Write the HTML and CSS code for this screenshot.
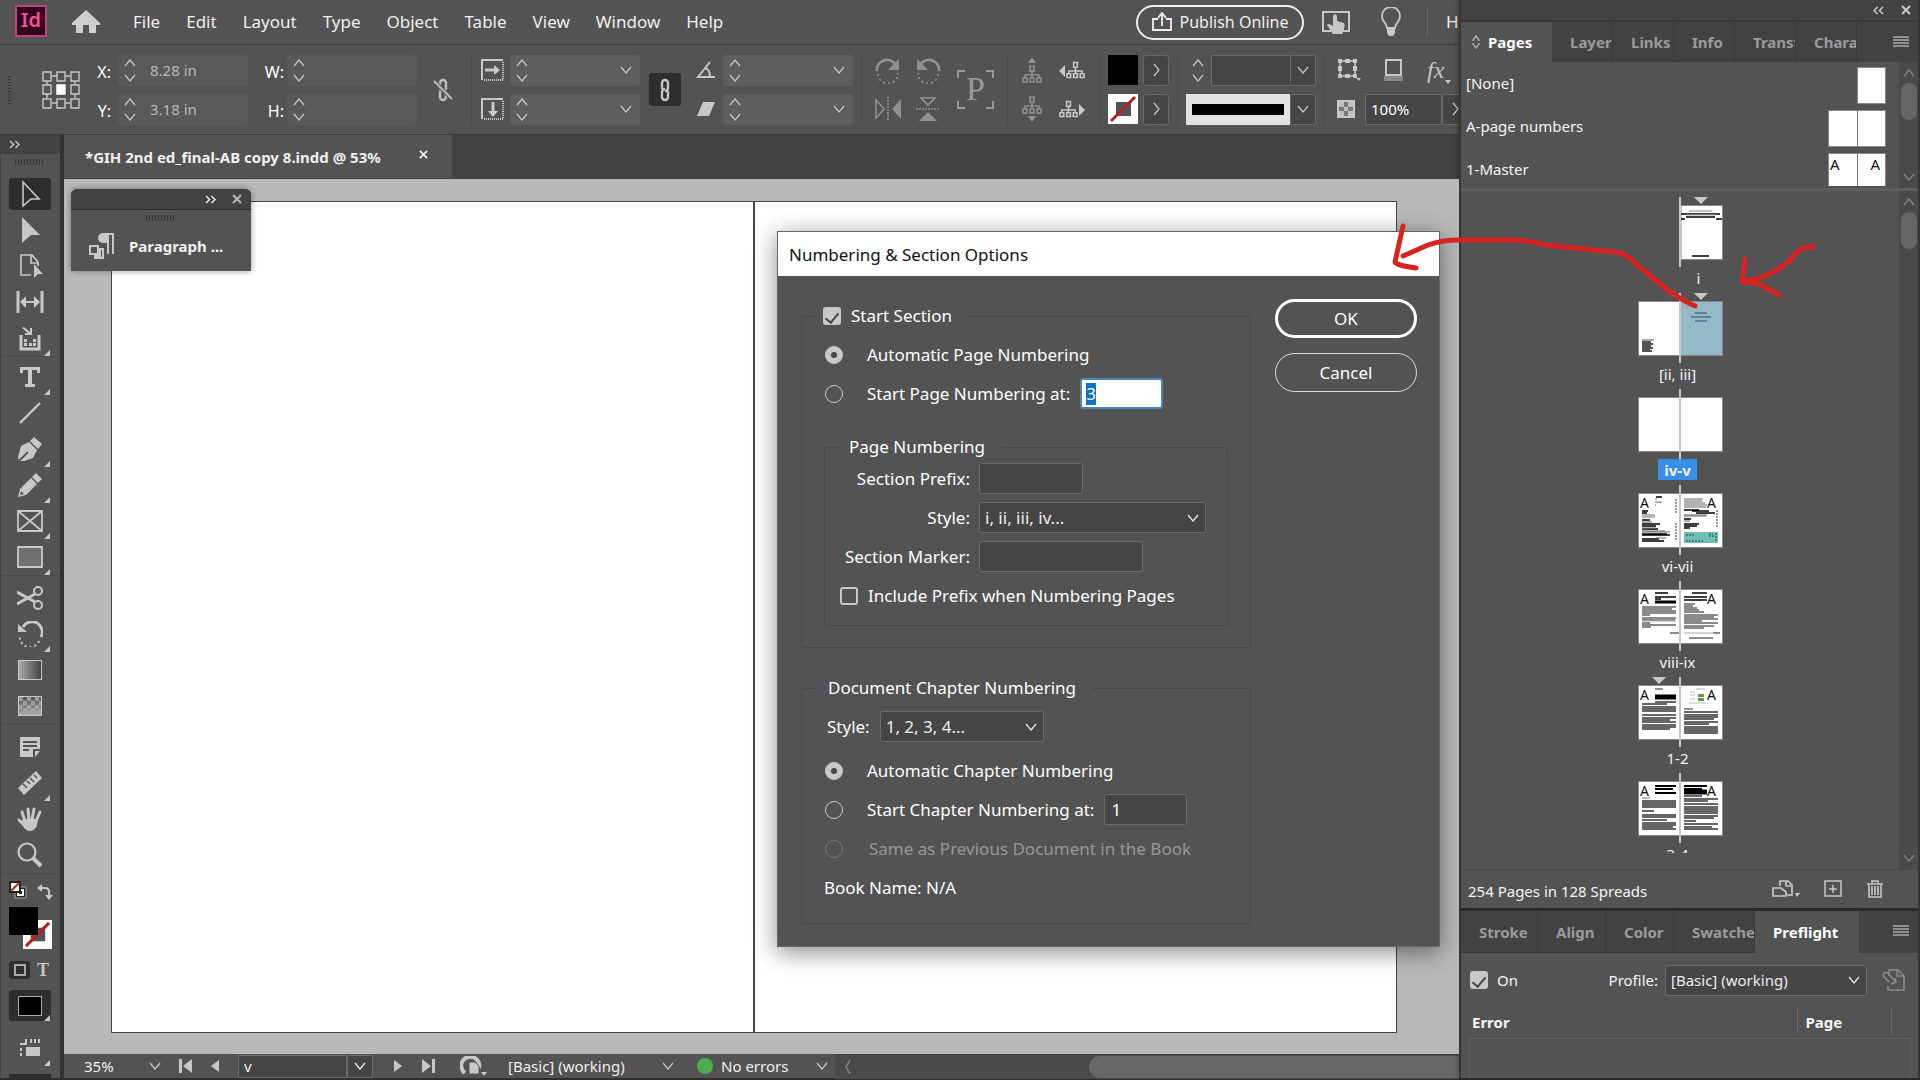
FILE: index.html
```html
<!DOCTYPE html>
<html lang="en">
<head>
<meta charset="utf-8">
<title>InDesign - Numbering &amp; Section Options</title>
<link rel="stylesheet" href="styles.css">
</head>
<body>
<svg class="defs" aria-hidden="true">
  <symbol id="down" viewBox="0 0 14 14"><path d="M2 4l5 6 5-6" fill="none" stroke="currentColor" stroke-width="1.2"/></symbol>
  <symbol id="up" viewBox="0 0 14 14"><path d="M2 10l5-6 5 6" fill="none" stroke="currentColor" stroke-width="1.2"/></symbol>
  <symbol id="right" viewBox="0 0 14 14"><path d="M5 1l5 6-5 6" fill="none" stroke="currentColor" stroke-width="1.2"/></symbol>
  <symbol id="expand" viewBox="0 0 12 10"><path d="M1 1l4 4-4 4M7 1l4 4-4 4" fill="none" stroke="currentColor" stroke-width="1.6"/></symbol>
  <symbol id="collapse" viewBox="0 0 12 10"><path d="M5 1L1 5l4 4M11 1L7 5l4 4" fill="none" stroke="currentColor" stroke-width="1.6"/></symbol>
  <symbol id="close" viewBox="0 0 10 10"><path d="M1 1l8 8M9 1L1 9" fill="none" stroke="currentColor" stroke-width="2"/></symbol>
  <symbol id="menu" viewBox="0 0 16 12"><path d="M0 1h16M0 4h16M0 7h16M0 10h16" stroke="currentColor" stroke-width="1.6"/></symbol>
  <symbol id="stepper" viewBox="0 0 14 30"><path d="M2 11l5-6 5 6M2 20l5 6 5-6" fill="none" stroke="currentColor" stroke-width="1.2"/></symbol>
  <symbol id="chain" viewBox="0 0 14 24"><path d="M4 11V5a3 3 0 0 1 6 0v5a3 3 0 0 1-3 3M10 13v6a3 3 0 0 1-6 0v-5a3 3 0 0 1 3-3" fill="none" stroke="currentColor" stroke-width="2.4"/></symbol>
  <symbol id="tree" viewBox="0 0 20 18"><path d="M8 1h4v5H8zM10 6v4M3 13v-3h14v3M10 10v3M1 13h4v4H1zM8 13h4v4H8zM15 13h4v4h-4z" fill="none" stroke="currentColor" stroke-width="1.6"/></symbol>
  <symbol id="none" viewBox="0 0 30 30"><path d="M0 0h30v30H0z" fill="#fff"/><path d="M8 8h15v14H8z" fill="#535353"/><path d="M3 27L27 3" stroke="#b8201f" stroke-width="3"/></symbol>
  <symbol id="corner" viewBox="0 0 6 6"><path d="M6 0v6H0z" fill="currentColor"/></symbol>
</svg>

<div class="app">
  <div class="workspace">
    <header class="menubar">
      <span class="logo">Id</span>
      <button class="icon-btn home" aria-label="Home"><svg width="28" height="24" viewBox="0 0 28 24"><path d="M14 0L0 13v2h4v8h7v-8h6v8h7v-8h4v-2z" fill="#cfcfcf"/></svg></button>
      <nav class="menus">
        <a href="#">File</a><a href="#">Edit</a><a href="#">Layout</a><a href="#">Type</a><a href="#">Object</a><a href="#">Table</a><a href="#">View</a><a href="#">Window</a><a href="#">Help</a>
      </nav>
      <button class="publish"><svg width="20" height="20" viewBox="0 0 20 20"><path d="M6 7H1v11h18V7h-5M10 14V3M6 6l4-5 4 5" fill="none" stroke="currentColor" stroke-width="1.8"/></svg>Publish Online</button>
      <button class="icon-btn touch" aria-label="Touch workspace"><svg width="28" height="24" viewBox="0 0 28 24"><path d="M9 21H1V2h26v19h-7" fill="none" stroke="#c8c8c8" stroke-width="2"/><path d="M11 6c0-2 4-2 4 0v5l7 2c1 1 1 6-2 11h-9l-6-9c1-2 3-1 6 1z" fill="#c8c8c8"/></svg></button>
      <button class="icon-btn bulb" aria-label="Learn"><svg width="22" height="30" viewBox="0 0 22 30"><path d="M7 21c0-5-5-6-5-12a9 9 0 0 1 18 0c0 6-5 7-5 12z" fill="none" stroke="#c8c8c8" stroke-width="1.8"/><path d="M7 22h8v4l-2 3H9l-2-3z" fill="#c8c8c8"/></svg></button>
      <i class="vline tall"></i>
      <span class="home-label">H</span>
    </header>

    <section class="control" aria-label="Control">
      <i class="grip-v"></i>
      <svg class="refgrid" width="38" height="38" viewBox="0 0 38 38" fill="none" stroke="#c8c8c8" stroke-width="1.4"><path d="M10 5h5M23 5h5M10 32h5M23 32h5M5 10v4M5 23v4M33 10v4M33 23v4M1 1h8v9H1zM15 1h8v9h-8zM29 1h8v9h-8zM1 14h8v9H1zM29 14h8v9h-8zM1 28h8v9H1zM15 28h8v9h-8zM29 28h8v9h-8z"/><path d="M15 14h8v9h-8z" fill="#fff" stroke="#fff"/></svg>
      <div class="pair labels xy"><label for="x">X:</label><label for="y">Y:</label></div>
      <div class="pair">
        <span class="field off"><svg width="14" height="30"><use href="#stepper"/></svg><input id="x" value="8.28 in"></span>
        <span class="field off"><svg width="14" height="30"><use href="#stepper"/></svg><input id="y" value="3.18 in"></span>
      </div>
      <div class="pair labels wh"><label for="w">W:</label><label for="h">H:</label></div>
      <div class="pair">
        <span class="field off"><svg width="14" height="30"><use href="#stepper"/></svg><input id="w"></span>
        <span class="field off"><svg width="14" height="30"><use href="#stepper"/></svg><input id="h"></span>
      </div>
      <svg class="unlink" width="20" height="24" viewBox="0 0 20 24" color="#bdbdbd"><use href="#chain" x="3" width="14" height="24"/><path d="M1 3l18 18" stroke="#535353" stroke-width="4"/><path d="M1 3l18 18" stroke="#bdbdbd" stroke-width="2"/></svg>
      <i class="vline"></i>
      <div class="pair icons scale">
        <svg width="24" height="22" viewBox="0 0 24 22"><path d="M1 21V1h21" fill="none" stroke="currentColor" stroke-width="2"/><path d="M22 3v18H2" fill="none" stroke="currentColor" stroke-width="2" stroke-dasharray="1 1"/><path d="M4 11h10" stroke="currentColor" stroke-width="3"/><path d="M13 6l6 5-6 5z" fill="currentColor"/></svg>
        <svg width="24" height="22" viewBox="0 0 24 22"><path d="M1 21V1h21" fill="none" stroke="currentColor" stroke-width="2"/><path d="M22 3v18H2" fill="none" stroke="currentColor" stroke-width="2" stroke-dasharray="1 1"/><path d="M12 4v10" stroke="currentColor" stroke-width="3"/><path d="M7 13h10l-5 6z" fill="currentColor"/></svg>
      </div>
      <div class="pair">
        <span class="field off light"><svg width="14" height="30"><use href="#stepper"/></svg><input aria-label="Scale X"><svg width="14" height="14"><use href="#down"/></svg></span>
        <span class="field off light"><svg width="14" height="30"><use href="#stepper"/></svg><input aria-label="Scale Y"><svg width="14" height="14"><use href="#down"/></svg></span>
      </div>
      <button class="linked" aria-label="Constrain proportions"><svg width="14" height="24"><use href="#chain"/></svg></button>
      <div class="pair icons angle">
        <svg width="20" height="18" viewBox="0 0 20 18"><path d="M14 1L2 16h17M9 7c4 1 5 5 5 9" fill="none" stroke="currentColor" stroke-width="2"/></svg>
        <svg width="20" height="18" viewBox="0 0 20 18"><path d="M7 2h12l-6 14H1z" fill="currentColor"/></svg>
      </div>
      <div class="pair">
        <span class="field off light"><svg width="14" height="30"><use href="#stepper"/></svg><input aria-label="Rotation"><svg width="14" height="14"><use href="#down"/></svg></span>
        <span class="field off light"><svg width="14" height="30"><use href="#stepper"/></svg><input aria-label="Shear"><svg width="14" height="14"><use href="#down"/></svg></span>
      </div>
      <i class="vline"></i>
      <div class="quad dim">
        <svg width="26" height="26" viewBox="0 0 26 26"><path d="M2 13A10 10 0 0 1 20 6" fill="none" stroke="currentColor" stroke-width="3"/><path d="M24 1v11H13z" fill="currentColor"/><path d="M3 16a10 10 0 0 0 20-1" fill="none" stroke="currentColor" stroke-width="2" stroke-dasharray="2 3"/></svg>
        <svg width="26" height="26" viewBox="0 0 26 26"><path d="M24 13A10 10 0 0 0 6 6" fill="none" stroke="currentColor" stroke-width="3"/><path d="M2 1v11h11z" fill="currentColor"/><path d="M23 16a10 10 0 0 1-20-1" fill="none" stroke="currentColor" stroke-width="2" stroke-dasharray="2 3"/></svg>
        <svg width="26" height="24" viewBox="0 0 26 24"><path d="M1 3v18l8-9z" fill="none" stroke="currentColor" stroke-width="1.6"/><path d="M13 0v24" stroke="currentColor" stroke-width="1.6" stroke-dasharray="2 1"/><path d="M26 2v20l-9-10z" fill="currentColor"/></svg>
        <svg width="26" height="24" viewBox="0 0 26 24"><path d="M6 1h14l-7 7z" fill="none" stroke="currentColor" stroke-width="1.6"/><path d="M1 12h24" stroke="currentColor" stroke-width="1.6" stroke-dasharray="2 1"/><path d="M4 24h18l-9-9z" fill="currentColor"/></svg>
      </div>
      <div class="bigp">P</div>
      <i class="vline"></i>
      <div class="quad trees">
        <svg class="dim" width="26" height="26" viewBox="0 0 26 26"><path d="M9 6l4-6 4 6z" fill="currentColor"/><use href="#tree" x="3" y="8" width="20" height="18"/></svg>
        <svg width="26" height="26" viewBox="0 0 26 26"><path d="M6 8v12l-6-6z" fill="currentColor"/><use href="#tree" x="7" y="4" width="19" height="18"/></svg>
        <svg class="dim" width="26" height="26" viewBox="0 0 26 26"><path d="M9 20l4 6 4-6z" fill="currentColor"/><use href="#tree" x="3" y="0" width="20" height="18"/></svg>
        <svg width="26" height="26" viewBox="0 0 26 26"><path d="M20 8v12l6-6z" fill="currentColor"/><use href="#tree" x="0" y="4" width="19" height="18"/></svg>
      </div>
      <i class="vline"></i>
      <div class="pair swatches">
        <span><i class="black"></i><button class="box" aria-label="Fill options"><svg width="14" height="14"><use href="#right"/></svg></button></span>
        <span><svg width="30" height="30"><use href="#none"/></svg><button class="box" aria-label="Stroke options"><svg width="14" height="14"><use href="#right"/></svg></button></span>
      </div>
      <i class="vline"></i>
      <div class="pair strokes">
        <span class="field"><svg width="14" height="30"><use href="#stepper"/></svg><input class="weight" aria-label="Stroke weight"><button class="box" aria-label="Weights"><svg width="14" height="14"><use href="#down"/></svg></button></span>
        <span class="field"><i class="solid"></i><button class="box" aria-label="Stroke types"><svg width="14" height="14"><use href="#down"/></svg></button></span>
      </div>
      <i class="vline"></i>
      <div class="pair effects">
        <span class="fxrow">
          <svg width="24" height="24" viewBox="0 0 24 24"><path d="M3 3h15v15H3z" fill="none" stroke="currentColor" stroke-width="1.500"/><path d="M1 1h4v4H1zM8 1h5v4H8zM16 1h4v4h-4zM1 8h4v5H1zM16 8h4v5h-4zM1 16h4v4H1zM8 16h5v4H8zM16 16h4v4h-4z" fill="currentColor"/><path d="M5 5h11v11H5z" fill="#535353"/><path d="M19 20h5l-2 3z" fill="currentColor"/></svg>
          <svg width="22" height="24" viewBox="0 0 22 24"><path d="M3 2h15v15H3z" fill="none" stroke="currentColor" stroke-width="2"/><path d="M1 18h19v5H1z" fill="#888"/></svg>
          <span class="fx">fx<svg width="6" height="4" viewBox="0 0 6 4"><path d="M0 0h6L3 4z" fill="currentColor"/></svg></span>
        </span>
        <span class="opacity"><svg width="18" height="18" viewBox="0 0 18 18"><path d="M1 1h16v16H1z" fill="#777" stroke="#c8c8c8" stroke-width="2"/><path d="M2 2h5v5H2zM11 2h5v5h-5zM7 7h4v4H7zM2 11h5v5H2zM11 11h5v5h-5z" fill="#c0c0c0"/></svg><input aria-label="Opacity" value="100%"><button class="box" aria-label="Opacity slider"><svg width="14" height="14"><use href="#right"/></svg></button></span>
      </div>
    </section>

    <div class="body">
      <aside class="tools" aria-label="Tools">
        <div class="tools-head"><svg width="11" height="9"><use href="#expand"/></svg></div>
        <i class="grip-h"></i>
        <div class="toolset">
          <button class="on" aria-label="Selection"><svg width="26" height="28" viewBox="0 0 26 28"><path d="M6 2l16 17h-8l-8 7z" fill="none" stroke="currentColor" stroke-width="1.6"/></svg></button>
          <button aria-label="Direct selection"><svg width="26" height="28" viewBox="0 0 26 28"><path d="M5 1l18 18h-9l-9 8z" fill="currentColor"/></svg></button>
          <button aria-label="Page"><svg width="26" height="26" viewBox="0 0 26 26"><path d="M14 22H4V2h11l6 7v4M14 2v8h7" fill="none" stroke="currentColor" stroke-width="1.7"/><path d="M17 11l9 10h-5l-4 4z" fill="currentColor"/></svg></button>
          <button aria-label="Gap"><svg width="28" height="22" viewBox="0 0 28 22"><path d="M2 0v22M26 0v22" stroke="currentColor" stroke-width="3"/><path d="M6 11h16" stroke="currentColor" stroke-width="2"/><path d="M10 5v12l-6-6zM18 5v12l6-6z" fill="currentColor"/></svg></button>
          <button aria-label="Content collector"><svg width="26" height="26" viewBox="0 0 26 26"><path d="M4 10v14h18V10" fill="none" stroke="currentColor" stroke-width="3"/><path d="M7 14h3v3H7zM16 14h3v3h-3zM7 18h3v3H7zM12 18h3v3h-3zM16 18h3v3h-3zM7 2l6 5V3h2v7H8V8h3L5 3z" fill="currentColor"/></svg><svg class="more" width="6" height="6"><use href="#corner"/></svg></button>
        </div>
        <div class="toolset">
          <button aria-label="Type"><svg width="24" height="24" viewBox="0 0 24 24"><path d="M2 2h20v6h-3V5h-5v14h3v3H7v-3h3V5H5v3H2z" fill="currentColor"/></svg><svg class="more" width="6" height="6"><use href="#corner"/></svg></button>
          <button aria-label="Line"><svg width="24" height="24" viewBox="0 0 24 24"><path d="M2 22L22 2" stroke="currentColor" stroke-width="2.4"/></svg></button>
          <button aria-label="Pen"><svg width="26" height="26" viewBox="0 0 26 26"><path d="M17 1l8 7-4 5-8-8z" fill="currentColor"/><path d="M12 6l8 8-4 8-9 3-5 0-1-4 3-11z" fill="currentColor"/><path d="M2 25l9-9" stroke="#535353" stroke-width="1.800"/></svg><svg class="more" width="6" height="6"><use href="#corner"/></svg></button>
          <button aria-label="Pencil"><svg width="26" height="26" viewBox="0 0 26 26"><path d="M19 1l6 6-4 4-6-6zM14 6l6 6L9 23l-8 2 2-8z" fill="currentColor"/><path d="M3 23l1-4 3 3z" fill="#535353"/></svg><svg class="more" width="6" height="6"><use href="#corner"/></svg></button>
          <button aria-label="Frame"><svg width="26" height="22" viewBox="0 0 26 22"><path d="M1 1h24v20H1zM1 1l24 20M25 1L1 21" fill="none" stroke="currentColor" stroke-width="1.8"/></svg><svg class="more" width="6" height="6"><use href="#corner"/></svg></button>
          <button aria-label="Rectangle"><svg width="26" height="22" viewBox="0 0 26 22"><path d="M1 1h24v20H1z" fill="#707070" stroke="currentColor" stroke-width="1.8"/></svg><svg class="more" width="6" height="6"><use href="#corner"/></svg></button>
        </div>
        <div class="toolset lower">
          <button aria-label="Scissors"><svg width="26" height="24" viewBox="0 0 26 24"><g fill="none" stroke="currentColor"><circle cx="21" cy="5" r="4" stroke-width="2"/><circle cx="21" cy="19" r="4" stroke-width="2"/><path d="M0 6l18 10M0 18L18 8" stroke-width="3"/></g></svg></button>
          <button aria-label="Rotate"><svg width="26" height="26" viewBox="0 0 26 26"><path d="M24 16A10 10 0 0 0 6 6" fill="none" stroke="currentColor" stroke-width="3"/><path d="M1 3v8h9z" fill="currentColor"/><path d="M22 20a10 10 0 0 1-19-6" fill="none" stroke="currentColor" stroke-width="2" stroke-dasharray="2 3"/></svg><svg class="more" width="6" height="6"><use href="#corner"/></svg></button>
          <button aria-label="Gradient"><i class="gradient"></i></button>
          <button aria-label="Gradient feather"><i class="feather"></i></button>
        </div>
        <div class="toolset lower">
          <button aria-label="Note"><svg width="24" height="24" viewBox="0 0 24 24"><path d="M2 2h20v12h-7v8H2z" fill="currentColor"/><path d="M17 16h5l-5 6z" fill="currentColor"/><path d="M5 7h14M5 11h14M5 15h6" stroke="#535353" stroke-width="1.8"/></svg></button>
          <button aria-label="Measure"><svg width="26" height="26" viewBox="0 0 26 26"><path d="M1 18L19 1l6 7L7 25z" fill="currentColor"/><path d="M6 14l4 4M10 11l3 3M13 8l4 4M17 5l3 3" stroke="#535353" stroke-width="1.6"/></svg><svg class="more" width="6" height="6"><use href="#corner"/></svg></button>
          <button aria-label="Hand"><svg width="26" height="26" viewBox="0 0 26 26"><path d="M8 15L5 6M12 14L11 3M15 14l2-11M19 15l4-9M8 20l-6-6" stroke="currentColor" stroke-width="3" stroke-linecap="round"/><path d="M6 13l14 0c2 5-2 12-7 12-4 0-6-3-9-8z" fill="currentColor"/></svg></button>
          <button aria-label="Zoom"><svg width="26" height="26" viewBox="0 0 26 26"><circle cx="10" cy="10" r="8.500" fill="none" stroke="currentColor" stroke-width="2.200"/><path d="M16 16l8 8" stroke="currentColor" stroke-width="4"/></svg></button>
        </div>
        <div class="swap">
          <svg width="18" height="18" viewBox="0 0 18 18"><path d="M6 6h11v11H6z" fill="#222" stroke="#aaa"/><path d="M9 9h5v5H9z" fill="none" stroke="#fff" stroke-width="2"/><path d="M1 1h10v10H1z" fill="#fff" stroke="#222" stroke-width="2"/><path d="M2 10l8-8" stroke="#b8201f" stroke-width="2"/></svg>
          <svg width="16" height="16" viewBox="0 0 16 16"><path d="M3 4h5q4 0 4 4v4" fill="none" stroke="#c8c8c8" stroke-width="2"/><path d="M5 0v8L0 4zM8 11h8l-4 5z" fill="#c8c8c8"/></svg>
        </div>
        <div class="fillstroke"><i class="black"></i><svg width="29" height="29"><use href="#none"/></svg></div>
        <div class="format"><button class="on" aria-label="Container"><i></i></button><button class="t" aria-label="Formatting affects text">T</button></div>
        <div class="toolset modes">
          <button class="on" aria-label="Apply color"><i class="black frame"></i><svg class="more" width="6" height="6"><use href="#corner"/></svg></button>
          <button aria-label="Screen mode"><svg width="20" height="20" viewBox="0 0 20 20"><path d="M6 8h14v9H6z" fill="currentColor"/><path d="M6 0v5H0M11 0v4M15 0v4M19 0v4M1 9v3M1 14v3" fill="none" stroke="currentColor" stroke-width="2"/></svg><svg class="more" width="6" height="6"><use href="#corner"/></svg></button>
        </div>
        <i class="tool-end"></i>
      </aside>

      <main class="document">
        <div class="tabs"><div class="doc-tab"><span>*GIH 2nd ed_final-AB copy 8.indd @ 53%</span><button aria-label="Close document"><svg width="9" height="9"><use href="#close"/></svg></button></div></div>
        <div class="pasteboard">
          <div class="sheet"></div><div class="sheet"></div>
          <section class="float">
            <div class="float-head"><svg width="11" height="9"><use href="#expand"/></svg><svg class="grey" width="10" height="10"><use href="#close"/></svg></div>
            <i class="grip-h"></i>
            <div class="float-body"><svg width="26" height="26" viewBox="0 0 26 26"><path d="M15 1h10M19 1v20M24 1v20" stroke="currentColor" stroke-width="2"/><path d="M18 0v10h-4a5 5 0 0 1 0-10z" fill="currentColor"/><path d="M1 13h8v8H1z" fill="none" stroke="currentColor" stroke-width="2"/><path d="M11 16h3v9H6v-2h5z" fill="none" stroke="currentColor" stroke-width="2"/></svg>Paragraph ...</div>
          </section>
        </div>
        <footer class="status">
          <span class="zoom">35%</span><svg width="14" height="14"><use href="#down"/></svg>
          <svg class="first" width="14" height="14" viewBox="0 0 14 14"><path d="M1 0h3v14H1zM14 0v14L5 7z" fill="currentColor"/></svg>
          <svg class="prev" width="8" height="12" viewBox="0 0 8 12"><path d="M8 0v12L0 6z" fill="currentColor"/></svg>
          <span class="page-field"><input aria-label="Page" value="v"><button class="box" aria-label="Go to page"><svg width="14" height="14"><use href="#down"/></svg></button></span>
          <svg class="next" width="8" height="12" viewBox="0 0 8 12"><path d="M0 0v12l8-6z" fill="currentColor"/></svg>
          <svg class="last" width="14" height="14" viewBox="0 0 14 14"><path d="M10 0h3v14h-3zM0 0v14l9-7z" fill="currentColor"/></svg>
          <svg class="cloud" width="28" height="20" viewBox="0 0 28 20"><path d="M5 17A9 9 0 1 1 19 12" fill="none" stroke="currentColor" stroke-width="4"/><path d="M9 6h6l4 4v8H9z" fill="currentColor" stroke="#535353"/><path d="M21 16h6l-3 4z" fill="currentColor"/></svg>
          <span class="profile">[Basic] (working)</span><svg width="14" height="14"><use href="#down"/></svg>
          <i class="dot"></i><span class="errors">No errors</span><svg width="14" height="14"><use href="#down"/></svg>
          <div class="hscroll"><svg width="10" height="16" viewBox="0 0 10 16"><path d="M7 1L3 8l4 7" fill="none" stroke="#888" stroke-width="1.500"/></svg><i></i></div>
        </footer>
      </main>
    </div>
  </div>

  <aside class="dock">
    <div class="dock-head"><svg width="11" height="9"><use href="#collapse"/></svg><svg width="10" height="10"><use href="#close"/></svg></div>
    <div class="ptabs top">
      <button class="active pages"><svg width="8" height="14" viewBox="0 0 8 14"><path d="M1 6V5l3-4 3 4v1M1 8v1l3 4 3-4V8" fill="none" stroke="#aaa" stroke-width="1.500"/></svg>Pages</button><button>Layers</button><button>Links</button><button>Info</button><button>Transform</button><button>Character</button><svg class="pmenu" width="16" height="12"><use href="#menu"/></svg>
    </div>
    <section class="masters">
      <ul>
        <li><span>[None]</span><div class="mini one"><i></i></div></li>
        <li><span>A-page numbers</span><div class="mini"><i></i><i></i></div></li>
        <li><span>1-Master</span><div class="mini"><i>A</i><i class="r">A</i></div></li>
      </ul>
      <div class="vscroll"><svg width="14" height="14"><use href="#up"/></svg><i></i><svg width="14" height="14"><use href="#down"/></svg></div>
    </section>
    <section class="spreads">
      <div class="list">
        <figure class="single"><svg width="85" height="70" viewBox="0 -8 85 70"><path d="M56-8h14l-7 7z" fill="#c8c8c8"/><path d="M43 .5h41.500v54H43z" fill="#fff" stroke="#888"/><path d="M51 6h23" stroke="#888"/><path d="M43 9h39M48 12h29M42 14h5M78 14h6M54 51h17" stroke="#000" stroke-width="1.500"/><path d="M48 10h29" stroke="#aaa"/><path d="M42-8v70" stroke="#c8c8c8" stroke-width="2"/></svg><figcaption>i</figcaption></figure>
        <figure><svg width="85" height="70" viewBox="0 -8 85 70"><path d="M56-8h14l-7 7z" fill="#c8c8c8"/><path d="M.5.500h84v54H.5z" fill="#fff" stroke="#888"/><path d="M43 1h41v53H43z" fill="#96b9c7"/><path d="M4 39h12" stroke="#aaa" stroke-width="2"/><path d="M4 41h9M4 43h11M4 45h9M4 47h11M4 49h8M4 50h10" stroke="#555" stroke-width="2"/><path d="M57 12h12" stroke="#1e4d6c"/><path d="M53 16h20M57 20h12" stroke="#46789a" stroke-width="1.500"/><path d="M42-8v70" stroke="#c8c8c8" stroke-width="2"/></svg><figcaption>[ii, iii]</figcaption></figure>
        <figure><svg width="85" height="70" viewBox="0 -8 85 70"><path d="M.5.500h84v54H.5z" fill="#fff" stroke="#888"/><path d="M42-8v70" stroke="#c8c8c8" stroke-width="2"/></svg><figcaption class="current">iv-v</figcaption></figure>
        <figure><svg width="85" height="70" viewBox="0 -8 85 70"><path d="M.5.500h84v54H.5z" fill="#fff" stroke="#888"/><path d="M18 4h6M4 18h6M4 20h5M4 27h8M4 31h18M4 33h14M4 36h16M4 41h25M4 42h28M4 46h17M4 48h22M46 17h15M54 18h17M58 20h19M46 26h7M46 31h15M46 33h13M46 35h6" stroke="#000" stroke-width="1.300"/><path d="M17 6h2M17 9h7M17 12h1M4 22h13M4 24h13M4 29h10M4 35h14M4 38h23M4 39h28M18 45h10M46 6h19M46 8h18M46 10h21M46 12h23M46 14h22M46 22h23M46 23h22M46 28h6" stroke="#666"/><path d="M38 6v14M38 30v18M79 17v18" stroke="#333" stroke-dasharray="2 1"/><path d="M46 39h34v11H46z" fill="#6fbfb5"/><path d="M48 42h9M48 48h18M71 41h4M71 43h5M78 40v9" stroke="#245" stroke-dasharray="2 1"/><text x="2" y="15">A</text><text x="69" y="15">A</text><path d="M42-8v70" stroke="#c8c8c8" stroke-width="2"/></svg><figcaption>vi-vii</figcaption></figure>
        <figure><svg width="85" height="70" viewBox="0 -8 85 70"><path d="M.5.500h84v54H.5z" fill="#fff" stroke="#888"/><path d="M17 4h13M17 8h21M17 10h6M54 4h15M46 8h23M46 11h23" stroke="#000" stroke-width="1.500"/><path d="M17 13h21" stroke="#000" stroke-width="3"/><path d="M4 18h34M4 20h30M4 22h34M4 24h34M4 26h8M4 29h34M4 31h33M4 34h8M4 36h34M4 38h9M46 15h11M46 17h9M46 19h13M46 21h15M46 23h20M46 26h34M46 28h30M46 30h34M46 32h18M46 34h34M46 37h30M46 39h20M32 44h9M75 44h7M51 49h24" stroke="#666" stroke-width="1.300"/><path d="M4 32h34M46 44h30" stroke="#aaa"/><text x="2" y="15">A</text><text x="69" y="15">A</text><path d="M42-8v70" stroke="#c8c8c8" stroke-width="2"/></svg><figcaption>viii-ix</figcaption></figure>
        <figure><svg width="85" height="70" viewBox="0 -8 85 70"><path d="M14-8h14l-7 7z" fill="#c8c8c8"/><path d="M.5.500h84v54H.5z" fill="#fff" stroke="#888"/><path d="M17 4h8M46 24h9" stroke="#222"/><path d="M17 12h21" stroke="#000" stroke-width="5"/><path d="M4 19h25M4 22h34M4 24h34M4 26h34M4 30h34M4 33h34M4 35h28M4 37h34M4 40h34M4 42h34M4 44h28M17 17h21M46 27h34M46 30h34M46 32h34M46 34h30M46 37h34M46 39h25M46 42h34M46 44h34M46 46h34M46 48h34" stroke="#666" stroke-width="1.800"/><path d="M60 9h6v3h-6zM60 13h6v3h-6z" fill="#67924f"/><path d="M52 7h5M52 10h5M52 14h5M58 4h9M51 18h17" stroke="#bbb"/><text x="2" y="15">A</text><text x="69" y="15">A</text><path d="M42-8v70" stroke="#c8c8c8" stroke-width="2"/></svg><figcaption>1-2</figcaption></figure>
        <figure><svg width="85" height="70" viewBox="0 -8 85 70"><path d="M.5.500h84v54H.5z" fill="#fff" stroke="#888"/><path d="M17 5h21M17 8h18M17 12h21M46 5h23M46 8h18" stroke="#000" stroke-width="2"/><path d="M46 11h23" stroke="#000" stroke-width="5"/><path d="M4 20h34M4 22h34M4 24h34M4 26h34M4 30h12M4 34h34M4 36h34M4 39h25M4 42h34M4 44h34M4 46h31M4 48h34M46 15h18M46 18h34M46 20h24M46 23h34M46 26h34M46 28h34M46 30h34M46 32h34M46 35h34M46 37h30M46 40h12M46 43h34M46 46h28M46 48h34" stroke="#666" stroke-width="1.800"/><path d="M4 17h8" stroke="#777"/><text x="2" y="15">A</text><text x="69" y="15">A</text><path d="M42-8v70" stroke="#c8c8c8" stroke-width="2"/></svg><figcaption>3-4</figcaption></figure>
      </div>
      <div class="vscroll"><svg width="14" height="14"><use href="#up"/></svg><i></i><svg width="14" height="14"><use href="#down"/></svg></div>
    </section>
    <div class="dock-foot"><span>254 Pages in 128 Spreads</span>
      <svg width="28" height="18" viewBox="0 0 28 18"><path d="M8 6V1h8l4 4v10h-5M14 1v5h5M1 8h8l5 4v4H1z" fill="none" stroke="currentColor" stroke-width="1.700"/><path d="M23 13h5l-3 4z" fill="currentColor"/></svg>
      <svg width="18" height="18" viewBox="0 0 18 18"><path d="M1 1h16v15H1zM9 5v8M5 9h8" fill="none" stroke="currentColor" stroke-width="1.500"/></svg>
      <svg width="18" height="18" viewBox="0 0 18 18"><path d="M1 4h16M6 3V1h6v2M3 5v12h12V5M6 6v9M9 6v9M12 6v9" fill="none" stroke="currentColor" stroke-width="1.600"/></svg>
    </div>
    <div class="ptabs bottom">
      <button>Stroke</button><button>Align</button><button>Color</button><button class="swatch-tab">Swatches</button><button class="active">Preflight</button><svg class="pmenu" width="16" height="12"><use href="#menu"/></svg>
    </div>
    <section class="preflight">
      <div class="prow">
        <input type="checkbox" id="on" checked><label for="on">On</label>
        <label class="plabel" for="prof">Profile:</label>
        <span class="select"><select id="prof"><option>[Basic] (working)</option></select><svg width="14" height="14"><use href="#down"/></svg></span>
        <svg class="embed" width="24" height="22" viewBox="0 0 24 22"><path d="M7 7V1h9l6 6v14H6v-4M15 1v6h7M9 15l5-2-1-4M14 13L6 4C3 2 0 5 2 8l5 5" fill="none" stroke="#8a8a8a" stroke-width="1.600"/></svg>
      </div>
      <table><thead><tr><th>Error</th><th class="pg">Page</th><th class="end"></th></tr></thead></table>
      <div class="results"></div>
    </section>
  </aside>

  <form class="dialog" role="dialog" aria-label="Numbering &amp; Section Options">
    <h1>Numbering &amp; Section Options</h1>
    <div class="dialog-body">
      <div class="groups">
        <fieldset>
          <legend class="check"><input type="checkbox" id="start" checked><label for="start">Start Section</label></legend>
          <div class="row"><input type="radio" name="p" id="p1" checked><label for="p1">Automatic Page Numbering</label></div>
          <div class="row"><input type="radio" name="p" id="p2"><label for="p2">Start Page Numbering at:</label><span class="num focus"><mark>3</mark><input aria-label="Start page number"></span></div>
          <fieldset class="inner">
            <legend>Page Numbering</legend>
            <div class="row"><label class="lead" for="prefix">Section Prefix:</label><input class="text short" id="prefix"></div>
            <div class="row"><label class="lead" for="style">Style:</label><span class="select wide"><select id="style"><option>i, ii, iii, iv...</option></select><svg width="14" height="14"><use href="#down"/></svg></span></div>
            <div class="row"><label class="lead" for="marker">Section Marker:</label><input class="text" id="marker"></div>
            <div class="row include"><input type="checkbox" id="inc"><label for="inc">Include Prefix when Numbering Pages</label></div>
          </fieldset>
        </fieldset>
        <fieldset class="chapter">
          <legend>Document Chapter Numbering</legend>
          <div class="row chapter-style"><label for="cstyle">Style:</label><span class="select mid"><select id="cstyle"><option>1, 2, 3, 4...</option></select><svg width="14" height="14"><use href="#down"/></svg></span></div>
          <div class="row"><input type="radio" name="c" id="c1" checked><label for="c1">Automatic Chapter Numbering</label></div>
          <div class="row"><input type="radio" name="c" id="c2"><label for="c2">Start Chapter Numbering at:</label><input class="text num" value="1" aria-label="Chapter number"></div>
          <div class="row disabled"><input type="radio" name="c" id="c3" disabled><label for="c3">Same as Previous Document in the Book</label></div>
          <div class="row">Book Name: N/A</div>
        </fieldset>
      </div>
      <div class="actions"><button type="button" class="ok">OK</button><button type="button">Cancel</button></div>
    </div>
  </form>

  <svg class="ink" width="440" height="100" viewBox="1385 215 440 100" fill="none" stroke="#d92323" stroke-width="5" stroke-linecap="round" stroke-linejoin="round"><path d="M1403 226l-8 36q0 3 21 6M1403 256l25-11q14-5 30-5h52q20 0 35 5l70 7q12 2 22 13l28 23q18 13 30 18"/><path d="M1813 247q-12-2-22 12-18 18-49 23l3-23M1742 282q18 0 24 6l13 7"/></svg>
</div>
</body>
</html>
```
FILE: styles.css
```css
* { box-sizing: border-box; }
body { margin: 0; background: #535353; color: #f0f0f0; font: 16px/20px "Noto Sans", "Open Sans", sans-serif; overflow: hidden; }
button, input, select { font: inherit; color: inherit; margin: 0; padding: 0; border: 0; border-radius: 0; background: none; min-width: 0; outline: 0; }
button { display: flex; align-items: center; justify-content: center; }
svg { display: block; flex: none; }
i { display: block; flex: none; font-style: normal; }
.defs { position: absolute; width: 0; height: 0; }
.app { display: flex; height: 100vh; position: relative; border-bottom: 2px solid #2e2e2e; }
.workspace { flex: 1; min-width: 0; display: flex; flex-direction: column; }
.black { background: #000; }

/* Menu bar */
.menubar { height: 45px; flex: none; display: flex; align-items: center; padding-left: 15px; border-bottom: 1px solid #3c3c3c; overflow: hidden; white-space: nowrap; }
.logo { width: 32px; height: 32px; margin-bottom: 3px; border: 2px solid #c0427f; background: #33021c; color: #f0529c; font-size: 20px; line-height: 26px; font-weight: 600; text-align: center; }
.home { margin-left: 25px; }
.menus { display: flex; gap: 26px; margin-left: 33px; font-size: 17px; }
.menus a { color: inherit; text-decoration: none; }
.publish { margin-left: auto; width: 168px; height: 35px; border: 2px solid #eee; border-radius: 18px; gap: 8px; font-size: 16px; }
.touch { margin-left: 18px; }
.bulb { margin-left: 30px; }
.vline { width: 1px; height: 71px; background: #494949; }
.vline.tall { height: 30px; margin-left: 25px; background: #666; }
.home-label { width: 13px; margin-left: 18px; overflow: hidden; font-size: 17px; }

/* Control bar */
.control { height: 90px; flex: none; display: flex; align-items: center; border-bottom: 1px solid #3c3c3c; padding-left: 8px; overflow: hidden; color: #c8c8c8; }
.control > * { flex: none; }
.grip-v { width: 3px; height: 28px; background: repeating-linear-gradient(#333 0 1px, #535353 1px 3px); }
.refgrid { margin-left: 31px; }
.pair { display: flex; flex-direction: column; gap: 8px; }
.labels label { height: 31px; line-height: 34px; text-align: right; color: #fff; }
.xy { width: 32px; padding-right: 1px; margin-right: 6px; }
.wh { width: 36px; margin-right: 3px; }
.field { display: flex; align-items: center; width: 130px; height: 31px; border-radius: 3px; }
.field.off { background: #595959; padding: 0 7px 0 5px; }
.field.light { background: #5e5e5e; }
.field input { flex: 1; height: 100%; padding-left: 13px; color: #b8b8b8; font-size: 15px; }
.unlink { margin: 0 18px 0 16px; }
.icons { gap: 17px; }
.scale { margin: 0 5px 0 9px; }
.linked { width: 32px; height: 33px; margin: 0 15px 0 9px; background: #2e2e2e; border-radius: 3px; }
.angle { gap: 21px; margin-right: 7px; }
.quad { display: grid; grid-template-columns: 26px 26px; gap: 13px 14px; margin: 0 16px 0 13px; }
.dim { color: #909090; }
.control > .vline { margin-left: 8px; }
.control > .unlink + .vline { margin-left: 0; }
.bigp { width: 37px; height: 39px; margin-right: 5px; font: 34px/38px "Liberation Serif", serif; text-align: center; color: #999; background: conic-gradient(#999 0 0) 0 0/8px 2px, conic-gradient(#999 0 0) 0 0/2px 8px, conic-gradient(#999 0 0) 100% 0/8px 2px, conic-gradient(#999 0 0) 100% 0/2px 8px, conic-gradient(#999 0 0) 0 100%/8px 2px, conic-gradient(#999 0 0) 0 100%/2px 8px, conic-gradient(#999 0 0) 100% 100%/8px 2px, conic-gradient(#999 0 0) 100% 100%/2px 8px; background-repeat: no-repeat; }
.trees { margin: 0 7px 0 11px; }
.swatches { margin-left: 7px; }
.swatches span { display: flex; align-items: center; gap: 5px; height: 31px; }
.swatches .black { width: 30px; height: 30px; }
.box { width: 26px; height: 31px; border: 1px solid #6a6a6a; border-radius: 3px; background: #454545; flex: none; }
.strokes { margin-left: 8px; }
.strokes .field > svg { margin: 0 6px 0 5px; }
.field .weight { height: 31px; background: #454545; border: 1px solid #6a6a6a; border-right: 0; }
.solid { flex: 1; height: 31px; border: 9px solid #e2e2e2; border-width: 10px 6px; background: #000; }
.effects { margin-left: 12px; }
.fxrow { display: flex; height: 31px; gap: 22px; align-items: center; }
.fx { display: flex; align-items: flex-end; gap: 1px; font: italic 24px/28px "Liberation Serif", serif; }
.opacity { display: flex; align-items: center; height: 31px; }
.opacity input { width: 77px; height: 31px; margin-left: 10px; padding-left: 5px; border: 1px solid #6a6a6a; background: #454545; color: #fff; font-size: 15px; }

/* Tools */
.body { flex: 1; min-height: 0; display: flex; }
.tools { width: 64px; flex: none; border-right: 4px solid #323232; border-left: 1px solid #444; overflow: hidden; color: #c8c8c8; }
.tools-head { height: 19px; padding: 5px 8px; background: #424242; }
.grip-h { width: 30px; height: 6px; background: repeating-linear-gradient(90deg, #333 0 1px, #535353 1px 3px); }
.tools .grip-h { margin: 5px 0 11px 14px; }
.toolset { display: grid; grid-auto-rows: 36px; padding: 0 9px 0 8px; border-bottom: 1px solid #4a4a4a; }
.toolset + .toolset { padding-top: 2px; }
.toolset + .lower { padding-top: 4px; }
.toolset button { position: relative; border-radius: 3px; }
.toolset .on { margin: 2px 0; background: #2e2e2e; }
.more { position: absolute; right: 1px; bottom: 0; }
.gradient, .feather { width: 24px; height: 20px; border: 1px solid #c8c8c8; background: linear-gradient(90deg, #aaa, #444); }
.feather { background: linear-gradient(transparent, #aaa), repeating-conic-gradient(#555 0 25%, #999 0 50%) 0 0/8px 8px; }
.swap { display: flex; gap: 10px; padding: 7px 8px 0; height: 33px; }
.swap svg:last-child { margin-top: 3px; }
.fillstroke { display: grid; margin-left: 8px; width: 43px; height: 42px; }
.fillstroke > * { grid-area: 1 / 1; }
.fillstroke .black { width: 29px; height: 28px; z-index: 1; }
.fillstroke svg { place-self: end; }
.format { display: flex; gap: 6px; margin: 12px 0 9px 8px; height: 18px; }
.format .on { width: 21px; background: #2e2e2e; border-radius: 3px; }
.format i { width: 12px; height: 12px; border: 2px solid #aaa; }
.format .t { font: bold 18px/18px "Liberation Serif", serif; width: 14px; }
.modes { grid-auto-rows: 35px; row-gap: 8px; border: 0; }
.frame { width: 24px; height: 20px; border: 1px solid #aaa; }
.tool-end { width: 42px; height: 4px; margin: 8px 0 0 8px; background: #2e2e2e; }

/* Document */
.document { flex: 1; min-width: 0; display: flex; flex-direction: column; }
.tabs { height: 44px; flex: none; background: #424242; border-bottom: 1px solid #3c3c3c; display: flex; }
.doc-tab { width: 388px; padding-left: 21px; background: #535353; display: flex; align-items: center; justify-content: space-between; font-size: 15px; font-weight: 700; white-space: nowrap; }
.doc-tab button { padding-right: 24px; margin-bottom: 4px; }
.pasteboard { flex: 1; min-height: 0; position: relative; background: #b9b9b9; display: flex; padding: 22px 62px 21px 47px; }
.sheet { flex: 1; background: #fff; border: 1px solid #444; }
.sheet + .sheet { border-left-width: 2px; margin-left: -1px; }
.float { position: absolute; left: 7px; top: 10px; width: 180px; background: #535353; border-radius: 6px 6px 0 0; box-shadow: 0 0 6px #0006; }
.float-head { height: 21px; background: #424242; border-bottom: 1px solid #2e2e2e; border-radius: 6px 6px 0 0; display: flex; justify-content: flex-end; align-items: center; gap: 16px; padding-right: 9px; }
.grey { color: #b8b8b8; }
.float .grip-h { margin: 5px 0 0 75px; }
.float-body { height: 50px; display: flex; align-items: center; gap: 14px; padding-left: 18px; font-size: 15px; font-weight: 700; }
.float-body svg { color: #c8c8c8; }
.status { height: 24px; flex: none; display: flex; align-items: center; font-size: 15px; white-space: nowrap; color: #c8c8c8; }
.status span { color: #f0f0f0; }
.zoom { width: 84px; padding-left: 20px; }
.first { margin: 0 19px 0 16px; }
.prev { margin-right: 19px; }
.page-field { display: flex; width: 135px; height: 23px; }
.page-field input { flex: 1; padding-left: 5px; border: 1px solid #6a6a6a; background: #454545; }
.page-field .box { height: 23px; }
.next { margin: 0 20px 0 21px; }
.cloud { margin: 0 20px 0 24px; }
.profile { width: 153px; }
.dot { width: 16px; height: 16px; margin: 0 8px 0 22px; border-radius: 50%; background: #4aae4d; }
.errors { width: 94px; }
.hscroll { flex: 1; height: 25px; margin-left: 6px; background: #4a4a4a; border-top: 1px solid #424242; display: flex; align-items: center; padding-left: 8px; }
.hscroll i { flex: 1; height: 22px; margin-left: 236px; background: #686868; border-radius: 11px 0 0 11px; }

/* Panel dock */
.dock { width: 461px; flex: none; display: flex; flex-direction: column; border: solid #353535; border-width: 0 2px; font-size: 15px; color: #f5f5f5; box-shadow: -1px 0 5px #0005; }
.dock-head { height: 22px; flex: none; background: #424242; border-bottom: 2px solid #363636; display: flex; align-items: center; justify-content: flex-end; gap: 17px; padding-right: 7px; color: #ccc; }
.ptabs { display: flex; flex: none; background: #424242; }
.ptabs button { height: 40px; justify-content: flex-start; overflow: hidden; padding-left: 18px; border-right: 1px solid #3a3a3a; border-bottom: 1px solid #3a3a3a; color: #9b9b9b; font-weight: 700; width: 61px; white-space: nowrap; }
.ptabs .active { background: #535353; border: 0; color: #fff; }
.ptabs .pages { width: 91px; padding-left: 11px; gap: 8px; }
.pmenu { margin: 14px 9px 0 auto; color: #aaa; }
.masters { display: flex; flex: none; height: 129px; border-bottom: 3px solid #5e5e5e; }
.masters ul { flex: 1; margin: 0; padding: 5px 13px 0 5px; list-style: none; height: 124px; overflow: hidden; }
.masters li { display: flex; height: 43px; justify-content: space-between; }
.masters span { padding-top: 6px; }
.mini { display: flex; width: 58px; height: 37px; border: 1px solid #888; background: #fff; }
.mini.one { width: 29px; }
.mini i { width: 50%; color: #111; padding-left: 1px; line-height: 20px; }
.mini i + i { border-left: 1px solid #777; }
.mini .r { text-align: right; padding-right: 5px; }
.vscroll { width: 19px; flex: none; background: #4a4a4a; color: #888; display: flex; flex-direction: column; align-items: center; padding: 4px 0; }
.vscroll i { width: 16px; height: 37px; margin: 3px 0 auto; border-radius: 8px; background: #666; }
.spreads { flex: 1; min-height: 0; display: flex; border-bottom: 1px solid #4a4a4a; }
.list { flex: 1; padding-top: 6px; margin-bottom: 16px; overflow: hidden; }
figure { margin: 0; height: 96px; display: flex; flex-direction: column; align-items: center; }
figure text { font-size: 14px; fill: #111; }
figcaption { margin: 1px 5px 0 0; height: 21px; font-size: 15px; line-height: 21px; }
.single figcaption { margin-left: 42px; }
.current { background: #378ee8; padding: 0 6px; font-weight: 700; margin-top: 0; line-height: 23px; }
.dock-foot { height: 38px; flex: none; display: flex; align-items: center; padding: 0 34px 0 7px; gap: 24px; color: #c8c8c8; }
.dock-foot span { flex: 1; color: #f5f5f5; padding-top: 4px; }
.bottom { border-top: 3px solid #2a2a2a; }
.bottom button { height: 42px; width: 68px; }
.bottom button:first-child { width: 77px; }
.bottom .swatch-tab { width: 81px; }
.bottom .active { width: 104px; }
.preflight { height: 125px; flex: none; display: flex; flex-direction: column; }
.prow { height: 54px; display: flex; align-items: center; padding: 0 12px 0 9px; }
.prow > input { margin-right: 9px; }
.plabel { margin: 0 7px 0 auto; }
.embed { margin-left: 15px; }
input[type=checkbox], input[type=radio] { appearance: none; width: 18px; height: 18px; flex: none; border: 2px solid #c8c8c8; border-radius: 3px; }
input[type=checkbox]:checked { background: #c8c8c8; display: grid; place-items: center; }
input[type=checkbox]:checked::after { content: ""; width: 6px; height: 11px; border: solid #444; border-width: 0 2px 2px 0; transform: rotate(40deg); }
.select { display: grid; width: 202px; height: 31px; align-items: center; color: #eee; }
.select > * { grid-area: 1 / 1; }
.select select { appearance: none; width: 100%; height: 100%; padding-left: 5px; border: 1px solid #6a6a6a; border-radius: 3px; background: #454545; }
.select svg { justify-self: end; margin-right: 6px; pointer-events: none; }
table { width: 100%; table-layout: fixed; border-collapse: collapse; }
th { height: 27px; padding: 3px 0 0 11px; text-align: left; font-weight: 700; }
.pg { width: 94px; padding-left: 8px; border: solid #6a6a6a; border-width: 0 1px; }
.end { width: 27px; padding: 0; }
.results { flex: 1; margin: 4px 7px 0 8px; border: 1px solid #606060; border-bottom: 0; }

/* Dialog */
.dialog { position: absolute; left: 777px; top: 231px; width: 663px; background: #535353; border: 1px solid #666; box-shadow: 0 5px 22px #0007; color: #fff; font-size: 17px; }
.dialog h1 { margin: 0; height: 44px; padding: 2px 0 0 11px; background: #fff; color: #111; font-size: 17px; line-height: 42px; font-weight: 400; }
.dialog-body { display: flex; justify-content: space-between; padding: 28px 22px 22px 23px; }
.groups { width: 450px; display: grid; gap: 28px; }
fieldset { min-width: 0; margin: 0; padding: 7px 22px 21px; border: 1px solid #494949; border-radius: 3px; }
.groups > fieldset > legend { margin-left: -6px; }
legend { height: 24px; line-height: 24px; padding: 0 16px 0 10px; }
.check { display: flex; align-items: center; gap: 10px; padding-left: 5px; }
.inner { margin-top: 22px; padding: 0 16px 10px 9px; }
.inner legend { margin-left: 5px; }
.row { height: 39px; display: flex; align-items: center; white-space: nowrap; }
.row > input[type=radio] { margin: 0 24px 0 1px; }
input[type=radio] { border: 1px solid #c8c8c8; border-radius: 50%; }
input[type=radio]:checked { border: 6px solid #c8c8c8; background: #444; }
.lead { width: 136px; text-align: right; margin-right: 9px; }
.text { width: 164px; height: 31px; padding-left: 6px; border: 1px solid #6a6a6a; border-radius: 3px; background: #454545; }
.short { width: 104px; }
.num { width: 83px; margin-left: 10px; }
.focus { height: 31px; display: flex; align-items: center; border: 2px solid #4c86b5; border-radius: 3px; background: #fff; padding-left: 4px; }
.focus input { width: 50px; }
.focus mark { background: #1471bd; color: #fff; line-height: 22px; }
.wide { width: 227px; }
.mid { width: 164px; margin-left: 10px; }
.include { padding-left: 6px; gap: 10px; }
.chapter { padding-bottom: 16px; }
.chapter-style { padding-left: 3px; margin-bottom: 5px; }
.disabled { color: #979797; }
.disabled input[type=radio] { border-color: #777; margin-right: 26px; }
.actions { display: grid; gap: 15px; align-content: start; margin-top: -5px; }
.actions button { width: 142px; height: 39px; border: 1px solid #ddd; border-radius: 20px; }
.actions .ok { border: 3px solid #fff; }

/* Hand-drawn arrows */
.ink { position: absolute; left: 1385px; top: 215px; pointer-events: none; }
```
